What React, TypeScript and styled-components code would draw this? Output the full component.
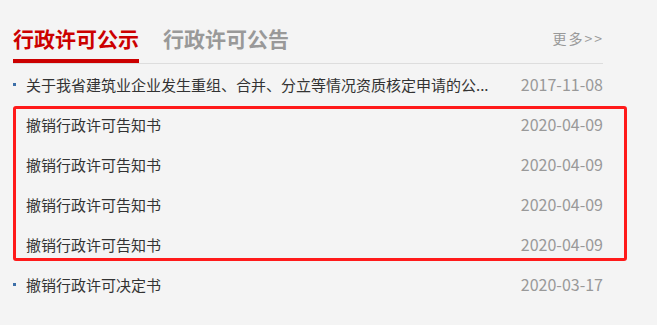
import React from "react";
import styled, { createGlobalStyle } from "styled-components";

const GlobalStyle = createGlobalStyle`
  html, body {
    margin: 0;
    padding: 0;
    background: #f4f4f4;
  }
  body {
    font-family: "Noto Sans CJK SC", "Noto Sans", sans-serif;
    color: #333;
  }
`;

const Panel = styled.div`
  width: 590px;
  padding: 0 0 0 13px;
`;

const Header = styled.div`
  display: flex;
  align-items: flex-end;
  border-bottom: 1px solid #dddddd;
  padding-top: 23px;
`;

const Tab = styled.a<{ $active?: boolean }>`
  display: block;
  font-size: 21px;
  font-weight: bold;
  line-height: 30px;
  padding-bottom: 6px;
  margin-right: 24px;
  white-space: nowrap;
  color: ${(p) => (p.$active ? "#cc0000" : "#999999")};
  border-bottom: 4px solid ${(p) => (p.$active ? "#cc0000" : "transparent")};
  cursor: pointer;
`;

const More = styled.a`
  margin-left: auto;
  align-self: flex-start;
  font-size: 14px;
  line-height: 30px;
  color: #999999;
  letter-spacing: 2px;
  margin-right: -1px;
  cursor: pointer;
`;

const List = styled.ul`
  position: relative;
  list-style: none;
  margin: 0;
  padding: 0;
`;

const Row = styled.li`
  display: flex;
  align-items: center;
  height: 40px;
  font-size: 15px;
`;

const Bullet = styled.span`
  flex: none;
  width: 3px;
  height: 3px;
  background: #3d6fa8;
  margin-right: 10px;
`;

const Title = styled.a`
  flex: 1;
  min-width: 0;
  overflow: hidden;
  white-space: nowrap;
  text-overflow: ellipsis;
  color: #333333;
  margin-right: 24px;
  cursor: pointer;
`;

const DateText = styled.span`
  flex: none;
  color: #999999;
  font-size: 16px;
`;

const Highlight = styled.div`
  position: absolute;
  left: 0;
  top: 42px;
  width: 614px;
  height: 155px;
  box-sizing: border-box;
  border: 3px solid #ff1a1a;
  border-radius: 3px;
  pointer-events: none;
`;

const items = [
  { title: "关于我省建筑业企业发生重组、合并、分立等情况资质核定申请的公...", date: "2017-11-08" },
  { title: "撤销行政许可告知书", date: "2020-04-09" },
  { title: "撤销行政许可告知书", date: "2020-04-09" },
  { title: "撤销行政许可告知书", date: "2020-04-09" },
  { title: "撤销行政许可告知书", date: "2020-04-09" },
  { title: "撤销行政许可决定书", date: "2020-03-17" },
];

export default function App() {
  return (
    <>
      <GlobalStyle />
      <Panel>
        <Header>
          <Tab $active>行政许可公示</Tab>
          <Tab>行政许可公告</Tab>
          <More>更多&gt;&gt;</More>
        </Header>
        <List>
          {items.map((it, i) => (
            <Row key={i}>
              <Bullet />
              <Title>{it.title}</Title>
              <DateText>{it.date}</DateText>
            </Row>
          ))}
          <Highlight />
        </List>
      </Panel>
    </>
  );
}
